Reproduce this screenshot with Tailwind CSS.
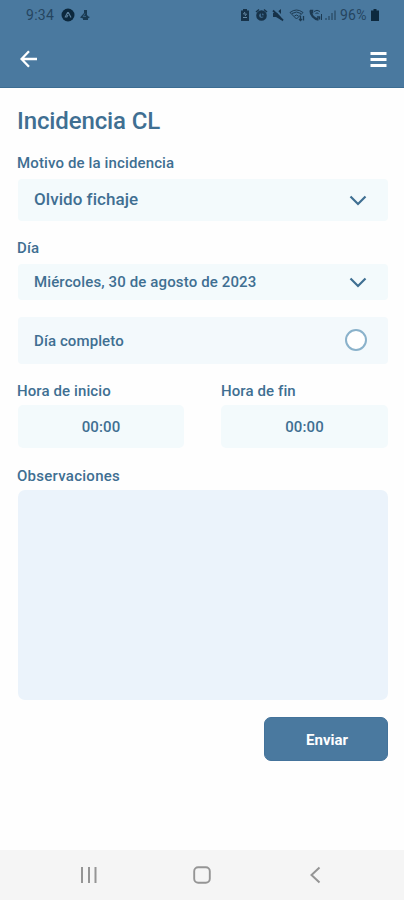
<!DOCTYPE html>
<html lang="es">
<head>
<meta charset="utf-8">
<title>Incidencia CL</title>
<script src="https://cdn.jsdelivr.net/npm/@tailwindcss/browser@4"></script>
</head>
<body class="bg-white">
<div class="flex h-[900px] w-[404px] flex-col overflow-hidden bg-[#fefefe] font-['Roboto',sans-serif] font-medium text-[#3f6f92]">
  <header class="h-[88px] shrink-0 border-b border-[#3c6d92] bg-[#4a799f] text-[#25455f]">
    <div class="flex h-[30px] items-center pl-[26px] pr-[24px] font-normal">
      <span class="w-[35px] text-[14px] tracking-[0.3px]">9:34</span>
      <svg class="h-[14px] w-[14px]" viewBox="0 0 14 14"><circle cx="7" cy="7" r="6.5" fill="#0c283d"/><path d="M4 9.5 6.6 4.5h.8L10 9.5M7 7l-1.5 2.5" fill="none" stroke="#5b7f9c" stroke-width="1.2"/></svg>
      <svg class="ml-[4px] h-[14px] w-[12px]" viewBox="0 0 12 14"><path d="M5 2h3v5l1.500 1.500 1.500.5-2 1.500V12H4v-1.500L1 9.500 5 5Z" fill="#193a52"/><path d="m6 5.500-1.800 3H7" fill="none" stroke="#4a799f" stroke-width=".6"/></svg>
      <div class="ml-auto flex items-center">
        <svg class="h-[14px] w-[10px]" viewBox="0 0 10 14"><path d="M3 1h4v1.500h2V13H1V2.500h2Z" fill="#17334a"/><path d="M3 9.500h4M5 4 3.500 6h3L5 8" fill="none" stroke="#6689a4" stroke-width="1"/></svg>
        <svg class="ml-[5px] h-[14px] w-[13px]" viewBox="0 0 13 14"><circle cx="6.500" cy="7.500" r="3.800" fill="none" stroke="#17334a" stroke-width="3"/><path d="M1 4 4 1.500M12 4 9 1.500M6.500 5v3H9" fill="none" stroke="#17334a" stroke-width="1.500"/></svg>
        <svg class="ml-[4px] h-[14px] w-[13px]" viewBox="0 0 13 14"><path d="M1 5h3l5-4V12L4 9H1Z" fill="#17334a"/><path d="m3 1 9 10" stroke="#4a799f" stroke-width="2"/><path d="m1 2.500 10 10" stroke="#17334a" stroke-width="1.800"/></svg>
        <svg class="ml-[4px] h-[14px] w-[17px]" viewBox="0 0 17 14" fill="none" stroke="#1c3a52" stroke-width="1"><path d="M1 4.500q6.500-5 13 0L7.500 11ZM3 5.500q4.500-3 9 0M5.500 8q2-2 4 0"/><path d="M11.500 8v4.500M10 11l1.500 1.500 1.500-1.500M14.500 12.500V8" stroke-width="1.300"/></svg>
        <svg class="ml-[2px] h-[14px] w-[15px]" viewBox="0 0 15 14" fill="none" stroke="#1c3a52"><path d="M2.500 2.500C2.500 7 6 11 10.500 11.500" stroke-width="2.300"/><path d="M2 2.500h2.500v3M11.500 11.500V9H9" stroke-width="1.500"/><path d="M6 3.500q3-2.500 6 0M7.500 5.500q1.500-1.200 3 0M13.500 6v6" stroke-width="1"/></svg>
        <svg class="ml-[2px] h-[14px] w-[12px]" viewBox="0 0 12 14"><path d="M1 12V10M4 12V8M7 12V5M10 12V2.500" stroke="#2a4b66" stroke-width="1.300"/></svg>
        <span class="ml-[3px] w-[30px] whitespace-nowrap text-[14px] tracking-[0.2px]">96%</span>
        <svg class="h-[14px] w-[10px]" viewBox="0 0 10 14"><path d="M3.500 1h3v1.500H9V13H1V2.500h2.500Z" fill="#0d293e"/></svg>
      </div>
    </div>
    <div class="flex h-[58px] items-center justify-between pl-[20px] pr-[17px] text-white">
      <svg class="h-[18px] w-[18px]" viewBox="0 0 18 18"><path d="M17 9H1.500M9 1.200 1.500 9 9 16.800" fill="none" stroke="currentColor" stroke-width="2.300"/></svg>
      <svg class="h-[17px] w-[17px]" viewBox="0 0 17 17"><path d="M.5 2.500h16M.5 8.500h16M.5 14.500h16" stroke="currentColor" stroke-width="2.800"/></svg>
    </div>
  </header>
  <main class="flex grow flex-col pl-[18px] pr-[16px]">
    <h1 class="mt-[17px] -ml-px h-[32px] text-[24px] leading-[32px] tracking-[-0.12px]">Incidencia CL</h1>
    <div class="mt-[16px] -ml-px h-[20px] text-[15px] leading-[20px] tracking-[0.13px]">Motivo de la incidencia</div>
    <div class="mt-[6px] flex h-[42px] items-center justify-between rounded-[4px] bg-[#f3fafc] pl-[16px] pr-[21px] text-[17px] tracking-[0.05px]">
      <span>Olvido fichaje</span>
      <svg class="h-[11px] w-[18px]" viewBox="0 0 18 11"><path d="m1.500 1.500 7.500 7.500 7.500-7.500" fill="none" stroke="currentColor" stroke-width="2.200"/></svg>
    </div>
    <div class="mt-[17px] -ml-px h-[20px] text-[15px] leading-[20px] tracking-[0.13px]">Día</div>
    <div class="mt-[6px] flex h-[36px] items-center justify-between rounded-[4px] bg-[#f3fafc] pl-[16px] pr-[21px] text-[15px] tracking-[0.13px]">
      <span>Miércoles, 30 de agosto de 2023</span>
      <svg class="h-[11px] w-[18px]" viewBox="0 0 18 11"><path d="m1.500 1.500 7.500 7.500 7.500-7.500" fill="none" stroke="currentColor" stroke-width="2.200"/></svg>
    </div>
    <div class="mt-[17px] flex h-[47px] items-center justify-between rounded-[4px] bg-[#f3f9fc] pl-[16px] pr-[21px] text-[15px] tracking-[0.1px]">
      <span class="pt-px">Día completo</span>
      <div class="mb-px h-[22px] w-[22px] rounded-full border-2 border-[#8ab2cb] bg-white"></div>
    </div>
    <div class="mt-[17px] grid grid-cols-[166px_167px] gap-x-[37px] text-[15px] tracking-[0.1px]">
      <div>
        <div class="-ml-px h-[20px] leading-[20px]">Hora de inicio</div>
        <div class="mt-[4px] flex h-[43px] items-center justify-center rounded-[5px] bg-[#f3fafc] pt-[2px]">00:00</div>
      </div>
      <div>
        <div class="h-[20px] leading-[20px]">Hora de fin</div>
        <div class="mt-[4px] flex h-[43px] items-center justify-center rounded-[5px] bg-[#f3fafc] pt-[2px]">00:00</div>
      </div>
    </div>
    <div class="mt-[18px] -ml-px h-[20px] text-[15px] leading-[20px] tracking-[0.26px]">Observaciones</div>
    <div class="mt-[4px] h-[210px] rounded-[7px] bg-[#ebf3fb]"></div>
    <button class="mt-[17px] h-[44px] w-[124px] self-end rounded-[7px] border border-[#44739b] bg-[#4a799f] pt-[3px] pl-[2px] text-[15px] font-bold text-white">Enviar</button>
  </main>
  <nav class="flex h-[50px] shrink-0 items-center bg-[#f5f5f5] pl-[80px] text-[#959595]">
    <svg class="h-[18px] w-[18px]" viewBox="0 0 18 18"><path d="M2 1v16M9 1v16M15.500 1v16" stroke="currentColor" stroke-width="2"/></svg>
    <svg class="ml-[95px] h-[18px] w-[18px]" viewBox="0 0 18 18"><rect x="1.200" y="1.200" width="15.600" height="15.600" rx="4" fill="none" stroke="currentColor" stroke-width="1.900"/></svg>
    <svg class="ml-[98px] h-[18px] w-[12px]" viewBox="0 0 12 18"><path d="M10.500 1.500 2.500 9l8 7.500" fill="none" stroke="currentColor" stroke-width="2"/></svg>
  </nav>
</div>
</body>
</html>
